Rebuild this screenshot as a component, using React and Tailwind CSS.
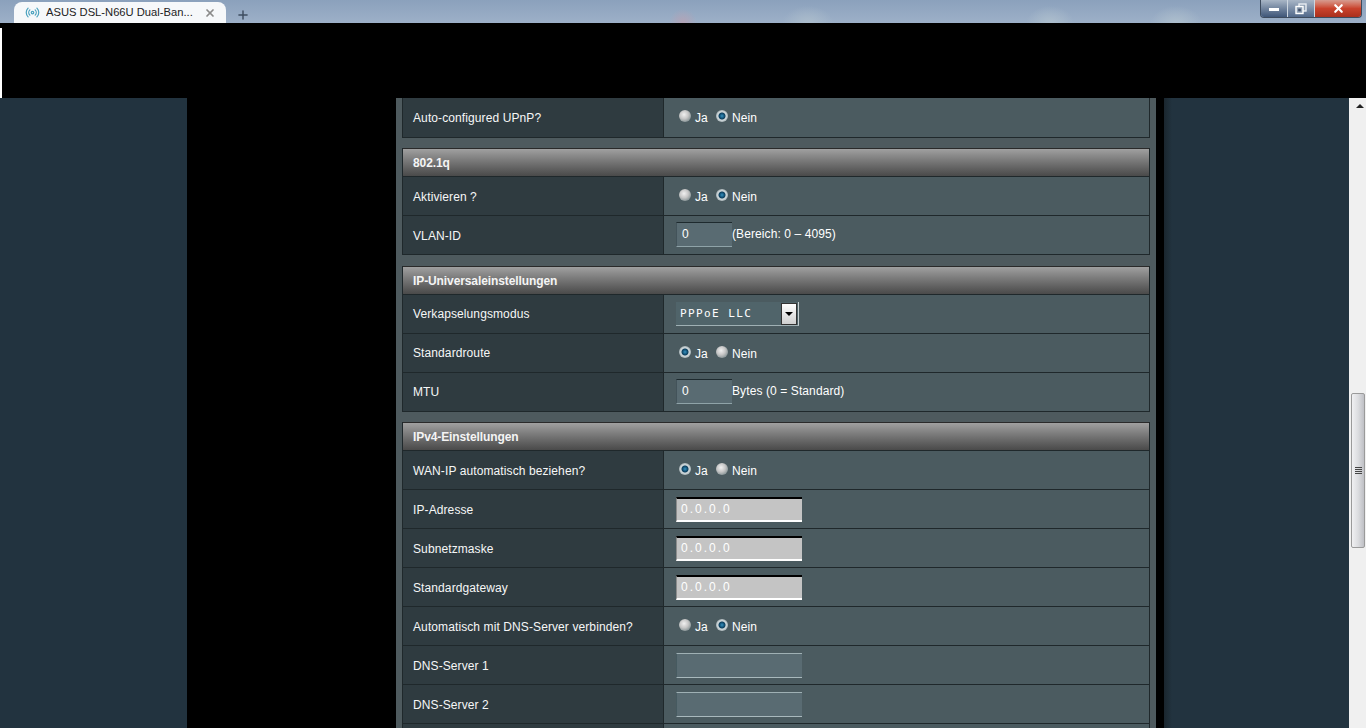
import React from 'react';
import { Radio, Plus, X } from 'lucide-react';

const sans = { fontFamily: '"Liberation Sans", Arial, sans-serif' };

const RadioDot = ({ on }) => (
  <span className={`inline-block w-[12px] h-[12px] rounded-full ${on ? 'bg-[radial-gradient(circle_at_50%_50%,#3a93bf_0,#14587f_24%,#0f3f5c_36%,#d5dde0_47%,#aab5b8_70%)]' : 'bg-[radial-gradient(circle_at_42%_38%,#f0f0f0_0,#c6c6c6_42%,#8f9a9c_72%)]'}`} />
);

const YesNo = ({ value, tall }) => (
  <div className="flex items-center pl-[15px] text-[12px] tracking-[0.1px] text-[#ffffff] leading-none">
    <span className="-mt-[3px] flex"><RadioDot on={value === 'ja'} /></span>
    <span className={`ml-[4px] w-[21px] ${tall ? '' : 'pt-[2px]'}`}>Ja</span>
    <span className="-mt-[3px] flex"><RadioDot on={value === 'nein'} /></span>
    <span className={`ml-[4px] ${tall ? '' : 'pt-[2px]'}`}>Nein</span>
  </div>
);

const SmallInput = ({ value, suffix }) => (
  <div className="flex items-center pl-[12px] -mt-[2px] text-[12px] tracking-[0.1px] text-[#ffffff]">
    <div className="w-[56px] h-[25px] bg-[#596b72] border-t border-l border-t-[#1e2a2e] border-l-[#43535a] border-b border-b-[#8fa3a8] pl-[5px] flex items-center">{value}</div>
    <span className="-mt-[1px]">{suffix}</span>
  </div>
);

const IpInput = ({ value, disabled }) => (
  <div className="pl-[12px]">
    <div className={disabled
      ? 'w-[126px] h-[25px] bg-[#c4c4c4] border-t-[2px] border-t-black border-b-[2px] border-b-white border-l border-l-[#8d8d8d] pl-[4px] pb-[1px] flex items-center text-[12px] tracking-[2px] text-white'
      : 'w-[126px] h-[25px] bg-[#596b72] border-t border-t-[#9fb0b4] border-b border-b-[#a9b9bd] border-l border-l-[#465a60]'}>
      {value}
    </div>
  </div>
);

const SelectBox = ({ value }) => (
  <div className="pl-[12px]">
    <div className="w-[123px] h-[24px] flex items-center bg-[#50646a] border-b border-b-[#9fb0b4] border-r border-r-[#c8d0d2]">
      <span className="pl-[4px] pt-[2px] font-['DejaVu_Sans_Mono'] text-[11px] tracking-[1.4px] text-white flex-1">{value}</span>
      <div className="w-[16px] h-[22px] mr-[1px] bg-gradient-to-b from-[#ffffff] to-[#cfcfcf] border border-[#333] flex items-center justify-center">
        <span className="w-0 h-0 border-l-[4px] border-r-[4px] border-t-[4px] border-l-transparent border-r-transparent border-t-black" />
      </div>
    </div>
  </div>
);

// flush keeps the label on the row's exact centre, the others sit 1px lower
const Row = ({ label, children, tall, flush }) => (
  <div className={`flex ${tall ? 'h-[40px]' : 'h-[39px]'} border-b border-b-[#1f282b]`}>
    <div className={`w-[261px] shrink-0 bg-[#2f3b40] border-r border-r-[#1f282b] flex items-center pl-[10px] text-[12px] tracking-[0.1px] text-[#f6f7f7] ${tall || flush ? '' : 'pt-[2px]'}`}>{label}</div>
    <div className="flex-1 bg-[#4b5b60] flex items-center">{children}</div>
  </div>
);

const Header = ({ title }) => (
  <div className="h-[29px] bg-gradient-to-b from-[#a0a0a0] to-[#4a4a4a] border-t border-t-[#2a2a2a] border-b border-b-[#1f282b] flex items-center pl-[10px] text-[12px] font-bold tracking-[-0.1px] text-[#f4f4f4]">{title}</div>
);

const Table = ({ title, children, className = '' }) => (
  <div className={`border-l border-r border-[#1f282b] ${className}`}>
    {title && <Header title={title} />}
    {children}
  </div>
);

const WindowButtons = () => (
  <div className="flex h-[18px] mr-[4px] rounded-b-[4px] overflow-hidden border border-t-0 border-[#3d4b5e]">
    <div className="w-[27px] bg-gradient-to-b from-[#a9b6c6] to-[#3f5678] border-r border-r-[#cdd6e0] flex items-center justify-center">
      <span className="w-[10px] h-[3px] mt-[2px] bg-white" />
    </div>
    <div className="w-[27px] bg-gradient-to-b from-[#a9b6c6] to-[#51688a] border-r border-r-[#cdd6e0] flex items-center justify-center">
      <svg width="12" height="12" viewBox="0 0 12 12" fill="none" stroke="#e8edf2" strokeWidth="1.4">
        <rect x="4" y="1" width="7" height="7" fill="#8fa0b4" />
        <rect x="1" y="3.5" width="7" height="7" fill="#8fa0b4" stroke="#ffffff" />
        <rect x="3.2" y="5.7" width="2.6" height="2.6" fill="#43506a" stroke="none" />
      </svg>
    </div>
    <div className="w-[46px] bg-gradient-to-b from-[#d69b8f] via-[#c9422c] to-[#a92f1d] flex items-center justify-center">
      <X size={13} strokeWidth={4} className="text-white" />
    </div>
  </div>
);

const Scrollbar = () => (
  <div className="w-[17px] shrink-0 bg-[#f0f0f0] flex flex-col pl-[2px]">
    <span className="mt-[6px] ml-[5px] w-0 h-0 border-l-[4px] border-r-[4px] border-b-[4px] border-l-transparent border-r-transparent border-b-[#222]" />
    <div className="mt-[285px] w-[14px] h-[155px] shrink-0 rounded-[2px] border border-[#9a9a9a] bg-gradient-to-r from-[#f0f0f2] via-[#dcdde0] to-[#bfc0c5] flex flex-col items-center justify-center gap-[1px]">
      <span className="w-[7px] h-[1px] bg-[#444]" />
      <span className="w-[7px] h-[1px] bg-[#444]" />
      <span className="w-[7px] h-[1px] bg-[#444]" />
      <span className="w-[7px] h-[1px] bg-[#444]" />
    </div>
  </div>
);

export default function App() {
  return (
    <div className="h-screen overflow-hidden flex flex-col bg-black" style={sans}>
      {/* browser chrome, the blurred spots are the desktop behind the glass */}
      <div className="h-[23px] shrink-0 flex items-start justify-between bg-[radial-gradient(ellipse_14px_14px_at_683px_23px,#b3a3b6,transparent),radial-gradient(ellipse_26px_18px_at_808px_24px,#acbdcc,transparent),radial-gradient(ellipse_24px_18px_at_1050px_24px,#aebfcd,transparent),radial-gradient(ellipse_26px_18px_at_1176px_24px,#aebfcd,transparent),linear-gradient(to_bottom,#8ba1bc,#9db0c8)]">
        <div className="flex items-end h-full">
          <div className="ml-[14px] mt-[2px] w-[212px] h-[21px] bg-[#f6f8fa] rounded-t-[8px] flex items-center pl-[11px] pr-[10px] text-[11.2px] text-[#222]">
            <Radio size={15} className="text-[#4da3bf] shrink-0" />
            <span className="ml-[6px] flex-1 whitespace-nowrap overflow-hidden">ASUS DSL-N66U Dual-Ban...</span>
            <X size={12} strokeWidth={3.5} className="text-[#8b8b8b] shrink-0" />
          </div>
          <Plus size={14} strokeWidth={2.5} className="ml-[10px] mb-[1px] text-[#3e4d60]" />
        </div>
        <WindowButtons />
      </div>

      {/* blacked out strip */}
      <div className="h-[75px] shrink-0 flex bg-black">
        <div className="w-[2px] mt-[5px] bg-white" />
      </div>

      <div className="flex-1 min-h-0 flex overflow-hidden">
        <div className="w-[187px] shrink-0 bg-[#22333f]" />
        <div className="w-[209px] shrink-0 bg-black" />
        <div className="w-[760px] shrink-0 bg-[#4e5a5e] pl-[6px] pr-[6px] overflow-hidden">
          <Table className="mb-[10px]">
            <Row tall label="Auto-configured UPnP?"><YesNo tall value="nein" /></Row>
          </Table>
          <Table title="802.1q" className="mb-[11px]">
            <Row label="Aktivieren ?"><YesNo value="nein" /></Row>
            <Row label="VLAN-ID"><SmallInput value="0" suffix="(Bereich: 0 – 4095)" /></Row>
          </Table>
          <Table title="IP-Universaleinstellungen" className="mb-[10px]">
            <Row flush label="Verkapselungsmodus"><SelectBox value="PPPoE LLC" /></Row>
            <Row flush label="Standardroute"><YesNo value="ja" /></Row>
            <Row flush label="MTU"><SmallInput value="0" suffix="Bytes (0 = Standard)" /></Row>
          </Table>
          <Table title="IPv4-Einstellungen">
            <Row label="WAN-IP automatisch beziehen?"><YesNo value="ja" /></Row>
            <Row label="IP-Adresse"><IpInput value="0.0.0.0" disabled /></Row>
            <Row label="Subnetzmaske"><IpInput value="0.0.0.0" disabled /></Row>
            <Row label="Standardgateway"><IpInput value="0.0.0.0" disabled /></Row>
            <Row label="Automatisch mit DNS-Server verbinden?"><YesNo value="nein" /></Row>
            <Row label="DNS-Server 1"><IpInput /></Row>
            <Row label="DNS-Server 2"><IpInput /></Row>
            <Row label="" />
          </Table>
        </div>
        <div className="w-[8px] shrink-0 bg-black" />
        <div className="flex-1 bg-[linear-gradient(to_right,#1a262e,#22333f_8px)]" />
        <Scrollbar />
      </div>
    </div>
  );
}
